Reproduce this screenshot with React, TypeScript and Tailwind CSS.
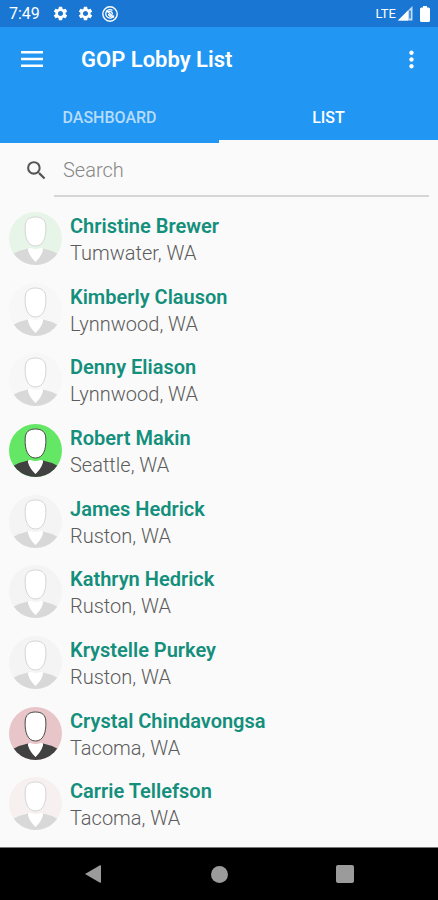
import { MdMoreVert, MdSearch, MdSettings } from "react-icons/md";

type Person = { name: string; place: string; tint: string; active?: boolean };

const people: Person[] = [
  { name: "Christine Brewer", place: "Tumwater, WA", tint: "#e6f5e7" },
  { name: "Kimberly Clauson", place: "Lynnwood, WA", tint: "#f7f7f7" },
  { name: "Denny Eliason", place: "Lynnwood, WA", tint: "#f7f7f7" },
  { name: "Robert Makin", place: "Seattle, WA", tint: "#64e764", active: true },
  { name: "James Hedrick", place: "Ruston, WA", tint: "#f5f4f4" },
  { name: "Kathryn Hedrick", place: "Ruston, WA", tint: "#f5f4f4" },
  { name: "Krystelle Purkey", place: "Ruston, WA", tint: "#f5f4f4" },
  { name: "Crystal Chindavongsa", place: "Tacoma, WA", tint: "#e8c5c8", active: true },
  { name: "Carrie Tellefson", place: "Tacoma, WA", tint: "#f7f0f0" },
];

function Avatar({ id, tint, active }: { id: string; tint: string; active?: boolean }) {
  const suit = active ? "#414141" : "#d8d8d8";
  const outline = active ? "#4a4a4a" : "#d4d4d4";
  return (
    <svg viewBox="0 0 53 53" className="size-[53px] shrink-0" aria-hidden="true">
      <clipPath id={id}>
        <circle cx="26.5" cy="26.5" r="26.5" />
      </clipPath>
      <g clipPath={`url(#${id})`}>
        <rect width="53" height="53" fill={tint} />
        <path d="M4 42 Q11 38 19 36.5 L26.5 50 L34 36.5 Q42 38 49 42 V53 H4 Z" fill={suit} />
        <path d="M19 38.5 Q18.5 35.5 21.5 36 Q26.5 38 31.5 36 Q34.5 35.5 34 38.5 Q32 45 26.5 50 Q21 45 19 38.5 Z" fill="#fff" />
        <path
          d="M26.5 5 C33 5 36.5 8 36.8 14 C37.5 26 34 34 26.5 34 C19 34 15.5 26 16.2 14 C16.5 8 20 5 26.5 5 Z"
          fill="#fff"
          stroke={outline}
          strokeWidth="1"
        />
      </g>
    </svg>
  );
}

function StatusBar() {
  return (
    <div className="flex h-[27px] items-center bg-[#1976d2] pr-2 pl-[9px] text-white">
      <span className="text-base leading-5">7:49</span>
      <MdSettings className="ml-3 size-[17px]" />
      <MdSettings className="ml-2 size-[17px]" />
      <svg viewBox="0 0 16 16" className="ml-2 size-4" fill="none" stroke="currentColor" aria-hidden="true">
        <circle cx="8" cy="8" r="7.2" strokeWidth="1.4" />
        <path d="M10.5 4.5 A4.2 4.2 0 1 0 11.8 9.5" strokeWidth="1.3" />
        <path d="M4.5 4.5 L12 11.5 M6.5 5.5 Q10.5 5 10.5 8.5 M6.5 8 Q7 10.5 9.5 10.5" strokeWidth="1.3" />
      </svg>
      <span className="ml-auto text-[13px] leading-5">LTE</span>
      <svg viewBox="0 0 15 15" className="ml-0.5 size-[15px]" aria-hidden="true">
        <path d="M0 14.5 L14.5 0 V14.5 Z" fill="#fff" fillOpacity="0.75" />
        <path d="M0 14.5 L10 4.5 V14.5 Z" fill="#fff" />
        <path d="M12 4.5 V12.5" stroke="#1976d2" strokeWidth="1.4" />
      </svg>
      <svg viewBox="0 0 10 16" className="ml-[7px] h-4 w-[10px]" fill="#fff" aria-hidden="true">
        <path d="M3 0 H7 V1.5 H8.5 Q10 1.5 10 3 V14.5 Q10 16 8.5 16 H1.5 Q0 16 0 14.5 V3 Q0 1.5 1.5 1.5 H3 Z" />
      </svg>
    </div>
  );
}

export default function App() {
  return (
    <div className="flex min-h-screen flex-col bg-[#fafafa] font-[Roboto,sans-serif]">
      <header className="bg-[#2196f3] text-white">
        <StatusBar />
        <div className="flex h-[64px] items-center pr-[13px] pl-[21px]">
          <button type="button" aria-label="Open menu">
            <svg viewBox="0 0 22 16" className="h-4 w-[22px]" fill="currentColor" aria-hidden="true">
              <path d="M0 0 H22 V2.5 H0 Z M0 6.75 H22 V9.25 H0 Z M0 13.5 H22 V16 H0 Z" />
            </svg>
          </button>
          <h1 className="ml-[38px] pt-0.5 text-[22px] leading-7 font-semibold">GOP Lobby List</h1>
          <button type="button" aria-label="More options" className="ml-auto">
            <MdMoreVert className="size-[27px]" />
          </button>
        </div>
        <div role="tablist" className="grid h-[52px] grid-cols-2 text-base font-medium">
          <button type="button" role="tab" aria-selected="false" className="border-b-3 border-transparent pt-1 text-[#b5dcfb]">
            DASHBOARD
          </button>
          <button type="button" role="tab" aria-selected="true" className="border-b-3 border-[#fafafa] pt-1">
            LIST
          </button>
        </div>
      </header>

      <main className="flex grow flex-col pb-2">
        <div className="mb-1.5 flex h-[54px] items-stretch pr-[9px] pl-6">
          <label htmlFor="search" aria-label="Search" className="flex w-[30px] items-center text-[#555]">
            <MdSearch className="size-[25px]" />
          </label>
          <input
            id="search"
            type="text"
            placeholder="Search"
            className="min-w-0 grow border-b-2 border-[#d5d5d5] bg-transparent pt-0.5 pl-[9px] text-xl font-light text-[#555] outline-none placeholder:text-[#888]"
          />
        </div>
        <ul className="flex grow flex-col">
          {people.map((p, i) => (
            <li key={p.name} className="flex grow items-center gap-2 px-[9px] py-1">
              <Avatar id={`avatar-${i}`} tint={p.tint} active={p.active} />
              <div className="pt-[3px] text-xl leading-[27px]">
                <div className="font-semibold text-[#138f7c]">{p.name}</div>
                <div className="font-light text-[#5c5c5c]">{p.place}</div>
              </div>
            </li>
          ))}
        </ul>
      </main>

      <nav className="flex h-[53px] items-center justify-center gap-[108px] border-t border-[#777] bg-black text-[#9b9b9b]">
        <button type="button" aria-label="Back">
          <svg viewBox="0 0 18 18" className="size-[18px]" fill="currentColor" aria-hidden="true">
            <path d="M0 9 L15 0.3 Q16 0 16 1 V17 Q16 18 15 17.7 Z" />
          </svg>
        </button>
        <button type="button" aria-label="Home" className="size-[17px] rounded-full bg-current" />
        <button type="button" aria-label="Recent apps" className="size-[18px] rounded-xs bg-current" />
      </nav>
    </div>
  );
}
